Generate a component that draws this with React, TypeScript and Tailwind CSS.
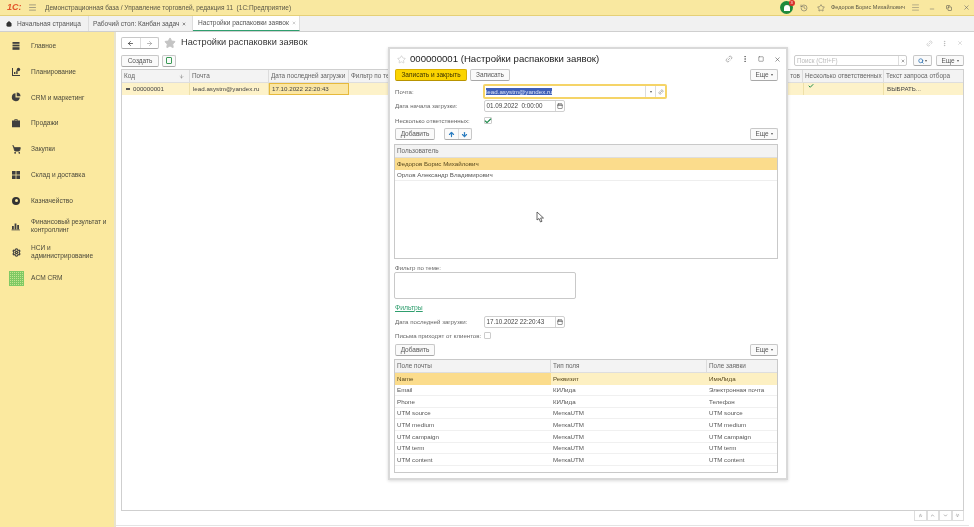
import React from "react";
import { House, History, Star, X, Link2, EllipsisVertical, Square, Minus, Calendar, Check, ArrowLeft, ArrowRight, ArrowUp, ArrowDown, Search, ChevronDown, ShoppingCart, Settings, Menu, Copy, ChevronsUp, ChevronUp, ChevronsDown } from "lucide-react";

const Ico = ({ children }: { children: React.ReactNode }) => (
  <svg width="10" height="10" viewBox="0 0 10 10" fill="#3f3f3f">{children}</svg>
);
const Btn = ({ children, className = "" }: { children?: React.ReactNode; className?: string }) => (
  <div className={"flex items-center justify-center h-[11.5px] rounded-[2px] border border-[#c8c8c8] border-b-[#a8a8a8] bg-[#fafafa] text-[6.5px] text-[#555] " + className}>{children}</div>
);
const More = () => (
  <Btn className="w-[28px] gap-[2px]">Еще<span className="w-0 h-0 border-x-[1.5px] border-x-transparent border-t-[2px] border-t-[#555]" /></Btn>
);
const Item = ({ icon, children, two }: { icon: React.ReactNode; children: React.ReactNode; two?: boolean }) => (
  <div className="flex items-center h-[25.8px] shrink-0">
    <div className="w-[31px] flex justify-center pl-[1px] text-[#3f3f3f]">{icon}</div>
    <div className={"text-[6.6px] text-[#4c4a3c] " + (two ? "leading-[8px]" : "")}>{children}</div>
  </div>
);
const Label = ({ children, className = "" }: { children: React.ReactNode; className?: string }) => (
  <div className={"w-[89px] shrink-0 text-[6.1px] text-[#666] whitespace-nowrap " + className}>{children}</div>
);
const DateField = ({ v }: { v: string }) => (
  <div className="flex items-center w-[81px] h-[11.5px] rounded-[2px] border border-[#cfcfcf] bg-white text-[6.3px] text-[#444]">
    <div className="flex-1 pl-[1.5px] whitespace-pre">{v}</div>
    <div className="w-[9px] h-full border-l border-[#d5d5d5] flex items-center justify-center"><Calendar size={6} strokeWidth={2} className="text-[#333]" /></div>
  </div>
);
const fields = [
  ["Email", "КИЛида", "Электронная почта"],
  ["Phone", "КИЛида", "Телефон"],
  ["UTM source", "МеткаUTM", "UTM source"],
  ["UTM medium", "МеткаUTM", "UTM medium"],
  ["UTM campaign", "МеткаUTM", "UTM campaign"],
  ["UTM term", "МеткаUTM", "UTM term"],
  ["UTM content", "МеткаUTM", "UTM content"],
];
const TH = ({ children, className = "" }: { children?: React.ReactNode; className?: string }) => (
  <div className={"h-full flex items-center px-[2px] border-r border-[#dcdcdc] text-[6.4px] text-[#666] whitespace-nowrap overflow-hidden " + className}>{children}</div>
);

export default function App() {
  return (
    <div className="relative w-[974px] h-[527px] overflow-hidden bg-white flex flex-col blur-[0.4px]" style={{ fontFamily: '"Liberation Sans", Arial, sans-serif' }}>
      {/* top bar */}
      <div className="h-[16px] shrink-0 flex items-center bg-[#f9e8a0] border-b border-[#e5d078]">
        <div className="w-[28px] pl-[7px] text-[9px] leading-none font-bold italic text-[#e2562a]">1С:</div>
        <Menu size={9} className="text-[#666]" strokeWidth={1.5} />
        <div className="ml-[8px] text-[6.5px] text-[#5a5746] whitespace-pre">Демонстрационная база / Управление торговлей, редакция 11  (1С:Предприятие)</div>
        <div className="flex-1" />
        <div className="relative w-[13px] h-[13px] rounded-full bg-[#1e8a3c] mr-[7px] flex items-center justify-center">
          <div className="w-[6px] h-[6px] rounded-t-full bg-white" />
          <div className="absolute -top-[1.5px] -right-[1.5px] w-[6px] h-[6px] rounded-full bg-[#d9322c] text-[4px] leading-[6px] text-center text-white">3</div>
        </div>
        <History size={8} className="text-[#555] mr-[9px]" strokeWidth={1.5} />
        <Star size={8} className="text-[#555] mr-[6px]" strokeWidth={1.5} />
        <div className="text-[5.6px] text-[#5a5746] whitespace-nowrap mr-[6px]">Федоров Борис Михайлович</div>
        <Menu size={9} className="text-[#666] mr-[9px]" strokeWidth={1.2} />
        <Minus size={6} className="text-[#666] mr-[11px] mt-[3px]" />
        <Copy size={6} className="text-[#444] mr-[11px]" strokeWidth={2} />
        <X size={7} className="text-[#666] mr-[4px]" />
      </div>
      {/* tabs */}
      <div className="h-[16px] shrink-0 flex bg-[#f1f1f1] border-b border-[#cfcfcf] text-[6.6px] text-[#555]">
        <div className="w-[89px] flex items-center border-r border-[#ddd]">
          <House size={6} fill="#333" className="ml-[6px] mr-[5px] text-[#333]" />Начальная страница
        </div>
        <div className="w-[104px] flex items-center pl-[4px] border-r border-[#ddd] whitespace-nowrap">
          Рабочий стол: Канбан задач<X size={4} strokeWidth={3} className="ml-[3px] text-[#333]" />
        </div>
        <div className="w-[107px] flex items-center pl-[5px] bg-white border-r border-[#ddd] border-b border-b-[#2f9e6e] whitespace-nowrap">
          Настройки распаковки заявок<X size={4} strokeWidth={2} className="ml-[3px] text-[#777]" />
        </div>
      </div>
      <div className="flex-1 flex min-h-0">
        {/* sidebar */}
        <div className="w-[116px] shrink-0 flex flex-col bg-[#fbe99f] border-r-2 border-[#e9e4cc] pt-[1px]">
          <Item icon={<Ico><rect x="1.5" y="1" width="7" height="1.8" /><rect x="1.5" y="3.6" width="7" height="1.8" /><rect x="1.5" y="6.2" width="7" height="1.8" /><rect x="1.5" y="8.2" width="7" height="0.8" /></Ico>}>Главное</Item>
          <Item icon={<Ico><path d="M1 1h1v7h7v1H1z" /><rect x="3" y="5" width="1.4" height="2" /><rect x="5.2" y="3.5" width="1.4" height="3.5" /><circle cx="7.5" cy="2.5" r="1.7" /></Ico>}>Планирование</Item>
          <Item icon={<Ico><path d="M4.5 1.2a4 4 0 1 0 4.3 4.3H4.5z" /><path d="M5.7 0.5v3.8h3.8a3.8 3.8 0 0 0-3.8-3.8z" /></Ico>}>CRM и маркетинг</Item>
          <Item icon={<Ico><path d="M3.4 2.5V1.2h3.2v1.3H9v6.7H1V2.5zM4.2 2.5h1.6v-.6H4.2z" /></Ico>}>Продажи</Item>
          <Item icon={<ShoppingCart size={9} fill="#3f3f3f" strokeWidth={2.5} />}>Закупки</Item>
          <Item icon={<Ico><rect x="1" y="1" width="3.6" height="3.6" /><rect x="5.4" y="1" width="3.6" height="3.6" /><rect x="1" y="5.4" width="3.6" height="3.6" /><rect x="5.4" y="5.4" width="3.6" height="3.6" /></Ico>}>Склад и доставка</Item>
          <Item icon={<div className="w-[8px] h-[8px] rounded-full bg-[#333] flex items-center justify-center"><div className="w-[3px] h-[3px] rounded-full bg-[#fbe99f]" /></div>}>Казначейство</Item>
          <Item two icon={<Ico><rect x="1" y="5" width="1.8" height="3.5" /><rect x="3.6" y="2.5" width="1.8" height="6" /><rect x="6.2" y="4" width="1.8" height="4.5" /><rect x="0.5" y="8.6" width="8.5" height="0.7" /></Ico>}>Финансовый результат и<br />контроллинг</Item>
          <Item two icon={<Settings size={9} strokeWidth={3.2} />}>НСИ и<br />администрирование</Item>
          <div className="flex items-center h-[25.8px] shrink-0">
            <div className="ml-[9px] w-[15px] h-[15px] mr-[7px] bg-[#c4e58f] bg-[linear-gradient(#7fc964_50%,transparent_50%),linear-gradient(90deg,#7fc964_50%,transparent_50%)] bg-[length:2px_2px]" />
            <div className="text-[6.6px] text-[#4c4a3c]">ACM CRM</div>
          </div>
        </div>
        {/* content */}
        <div className="flex-1 min-w-0 flex flex-col pl-[5px] pr-[10px]">
          <div className="flex items-center h-[21px] shrink-0 pt-[1px]">
            <div className="flex h-[12px] w-[38px] rounded-[2px] border border-[#c8c8c8] border-b-[#aaa]">
              <div className="flex-1 flex items-center justify-center border-r border-[#ddd]"><ArrowLeft size={7} strokeWidth={2.5} className="text-[#333]" /></div>
              <div className="flex-1 flex items-center justify-center"><ArrowRight size={7} strokeWidth={2} className="text-[#888]" /></div>
            </div>
            <Star size={12} fill="#c4c4c4" className="ml-[5px] text-[#c4c4c4]" />
            <div className="ml-[5px] text-[9.2px] text-[#333] whitespace-nowrap">Настройки распаковки заявок</div>
            <div className="flex-1" />
            <Link2 size={7} className="text-[#bbb] mr-[8px] -rotate-45" />
            <EllipsisVertical size={7} className="text-[#aaa] mr-[9px]" />
            <X size={6} className="text-[#bbb] mr-[1px]" />
          </div>
          <div className="flex items-center h-[15px] shrink-0">
            <Btn className="w-[38px] h-[12px]">Создать</Btn>
            <Btn className="w-[14px] h-[12px] ml-[3px]"><div className="w-[6px] h-[7px] border border-[#3a9a55] rounded-[1px]" /></Btn>
            <div className="flex-1" />
            <div className="flex items-center h-[11.5px] w-[113px] border border-[#ccc] rounded-[2px] text-[6.3px] text-[#bbb] pl-[2px] mr-[6px]">
              <div className="flex-1">Поиск (Ctrl+F)</div>
              <div className="w-[8px] h-full border-l border-[#ddd] flex items-center justify-center"><X size={4} strokeWidth={3} className="text-[#555]" /></div>
            </div>
            <Btn className="w-[19px] mr-[4px] gap-[1px]"><Search size={6} strokeWidth={3} className="text-[#2a6fb0]" /><span className="w-0 h-0 border-x-[1.5px] border-x-transparent border-t-[2px] border-t-[#555]" /></Btn>
            <More />
          </div>
          <div className="flex-1 min-h-0 mt-[1px] border border-b-0 border-[#cfcfcf] flex flex-col">
            <div className="flex h-[13px] shrink-0 bg-[#f3f3f3] border-b border-[#dedede]">
              <TH className="w-[68px] justify-between pr-[5px]">Код<ArrowDown size={5} strokeWidth={2} /></TH>
              <TH className="w-[79px]">Почта</TH>
              <TH className="w-[80px]">Дата последней загрузки</TH>
              <TH className="w-[39px] border-r-0 px-[1px]">Фильтр по те</TH>
              <div className="flex-1" />
              <TH className="w-[15px] justify-end">тов</TH>
              <TH className="w-[81px]">Несколько ответственных</TH>
              <TH className="w-[79px] border-r-0">Текст запроса отбора</TH>
            </div>
            <div className="flex h-[12px] shrink-0 bg-[#fdf2c9] text-[6.2px] text-[#444]">
              <div className="w-[68px] flex items-center pl-[4px] gap-[3px] border-r border-[#eee0a8]"><span className="w-[4px] h-[1.5px] bg-[#555]" />000000001</div>
              <div className="w-[79px] flex items-center pl-[3px] border-r border-[#eee0a8]">lead.asystm@yandex.ru</div>
              <div className="w-[80px] flex items-center pl-[2px] bg-[#fbe6a2] border border-[#e6b93c]">17.10.2022 22:20:43</div>
              <div className="flex-1" />
              <div className="w-[81px] border-x border-[#eee0a8] pl-[4px]"><Check size={6} strokeWidth={4} className="text-[#1d8a4a]" /></div>
              <div className="w-[79px] flex items-center pl-[3px]">ВЫБРАТЬ...</div>
            </div>
            <div className="flex-1" />
          </div>
          <div className="h-[11px] shrink-0 border-t border-[#cfcfcf] flex justify-end">
            {[ChevronsUp, ChevronUp, ChevronDown, ChevronsDown].map((I, i) => (
              <div key={i} className="w-[12.5px] h-[10px] border-l border-b border-r border-[#ddd] flex items-center justify-center"><I size={5} strokeWidth={3} className="text-[#888]" /></div>
            ))}
          </div>
          <div className="h-[5px] shrink-0 -mx-[5px] border-b border-[#e4e4e4]" />
          <div className="h-px shrink-0" />
        </div>
      </div>

      {/* modal */}
      <div className="absolute left-[388px] top-[47px] w-[400px] h-[433px] bg-white border-2 border-[#d9d9d9] shadow-[0_1px_3px_rgba(0,0,0,0.15)] flex flex-col pl-[5px] pr-[8px]">
        <div className="flex items-center h-[20px] shrink-0">
          <Star size={9} className="text-[#bdbdbd] ml-[2px]" strokeWidth={1.5} />
          <div className="ml-[4px] text-[9.6px] text-[#222] whitespace-nowrap">000000001 (Настройки распаковки заявок)</div>
          <div className="flex-1" />
          <Link2 size={8} className="text-[#777] mr-[8px] -rotate-45" strokeWidth={1.5} />
          <EllipsisVertical size={8} className="text-[#555] mr-[9px]" strokeWidth={2} />
          <Square size={6} className="text-[#555] mr-[10px]" strokeWidth={2} />
          <X size={7} className="text-[#555] mr-[-3px]" strokeWidth={2} />
        </div>
        <div className="flex items-center shrink-0 h-[12px]">
          <div className="flex items-center justify-center w-[72px] h-[11.5px] rounded-[2px] bg-[#fbd400] border border-[#d9ae00] border-b-[#b89300] text-[6.5px] text-[#3c3300]">Записать и закрыть</div>
          <Btn className="w-[40px] ml-[3px]">Записать</Btn>
          <div className="flex-1" />
          <More />
        </div>
        <div className="flex items-center shrink-0 h-[15px] mt-[3px]">
          <Label>Почта:</Label>
          <div className="flex items-center w-[184px] h-[14.5px] -ml-[1px] rounded-[2px] border-2 border-[#f5d468] bg-white text-[6.2px]">
            <div className="flex-1 pl-[1px]"><span className="bg-[#3f5fb8] text-[#dfe6f7]">lead.asystm@yandex.ru</span></div>
            <div className="w-[10px] h-full border-l border-[#ddd] flex items-center justify-center"><span className="w-0 h-0 border-x-[1.5px] border-x-transparent border-t-[2px] border-t-[#555]" /></div>
            <div className="w-[10px] h-full border-l border-[#ddd] flex items-center justify-center"><Link2 size={6} className="text-[#777] -rotate-45" /></div>
          </div>
        </div>
        <div className="flex items-center shrink-0 h-[12px] mt-[1px]">
          <Label>Дата начала загрузки:</Label>
          <DateField v="01.09.2022  0:00:00" />
        </div>
        <div className="flex items-center shrink-0 h-[9px] mt-[4px]">
          <Label>Несколько ответственных:</Label>
          <div className="w-[7.5px] h-[7.5px] border border-[#ccc] rounded-[1px] flex items-center justify-center"><Check size={8} strokeWidth={3.5} className="text-[#1d8a4a] shrink-0" /></div>
        </div>
        <div className="flex items-center shrink-0 h-[12px] mt-[3px]">
          <Btn className="w-[40px]">Добавить</Btn>
          <div className="flex h-[11.5px] w-[28px] ml-[9px] rounded-[2px] border border-[#c8c8c8] border-b-[#aaa] bg-[#fafafa]">
            <div className="flex-1 flex items-center justify-center border-r border-[#ddd]"><ArrowUp size={7} strokeWidth={4} className="text-[#2a7cc0]" /></div>
            <div className="flex-1 flex items-center justify-center"><ArrowDown size={7} strokeWidth={4} className="text-[#2a7cc0]" /></div>
          </div>
          <div className="flex-1" />
          <More />
        </div>
        <div className="h-[115px] shrink-0 mt-[4px] -ml-[1px] border border-[#c9c9c9] flex flex-col">
          <div className="h-[13px] shrink-0 flex items-center px-[2px] bg-[#f3f3f3] border-b border-[#dedede] text-[6.4px] text-[#666]">Пользователь</div>
          <div className="h-[12px] shrink-0 flex items-center px-[2px] bg-[#fbdc8c] text-[6.2px] text-[#5a4a20]">Федоров Борис Михайлович</div>
          <div className="h-[11px] shrink-0 flex items-center px-[2px] border-b border-[#eee] text-[6.2px] text-[#555]">Орлов Александр Владимирович</div>
        </div>
        <div className="shrink-0 mt-[5px] h-[8px] flex items-center text-[6.1px] text-[#666]">Фильтр по теме:</div>
        <div className="shrink-0 -ml-[1px] w-[182px] h-[27px] border border-[#c9c9c9] rounded-[2px]" />
        <div className="shrink-0 mt-[4px] h-[10px] flex items-center text-[6.8px] text-[#2f9e6e] underline">Фильтры</div>
        <div className="flex items-center shrink-0 h-[12px] mt-[3px]">
          <Label>Дата последней загрузки:</Label>
          <DateField v="17.10.2022 22:20:43" />
        </div>
        <div className="flex items-center shrink-0 h-[9px] mt-[3px]">
          <Label>Письма приходят от клиентов:</Label>
          <div className="w-[7px] h-[7px] border border-[#ccc] rounded-[1px]" />
        </div>
        <div className="flex items-center shrink-0 h-[12px] mt-[4px]">
          <Btn className="w-[40px]">Добавить</Btn>
          <div className="flex-1" />
          <More />
        </div>
        <div className="h-[114px] shrink-0 mt-[3px] -ml-[1px] border border-[#c9c9c9] flex flex-col">
          <div className="flex h-[13px] shrink-0 bg-[#f3f3f3] border-b border-[#dedede]">
            <TH className="w-[156px]">Поле почты</TH>
            <TH className="w-[156px]">Тип поля</TH>
            <TH className="flex-1 border-r-0">Поле заявки</TH>
          </div>
          <div className="flex h-[11.6px] shrink-0 bg-[#fdf0c2] text-[6.2px] text-[#5a4a20]">
            <div className="w-[156px] flex items-center px-[2px] bg-[#fbdc8c]">Name</div>
            <div className="w-[156px] flex items-center px-[2px]">Реквизит</div>
            <div className="flex-1 flex items-center px-[2px]">ИмяЛида</div>
          </div>
          {fields.map((r) => (
            <div key={r[0]} className="flex h-[11.6px] shrink-0 border-b border-[#f0f0f0] text-[6.2px] text-[#555]">
              <div className="w-[156px] flex items-center px-[2px]">{r[0]}</div>
              <div className="w-[156px] flex items-center px-[2px]">{r[1]}</div>
              <div className="flex-1 flex items-center px-[2px]">{r[2]}</div>
            </div>
          ))}
        </div>
      </div>
      {/* cursor */}
      <svg className="absolute left-[536px] top-[211px]" width="9" height="12" viewBox="0 0 9 12"><path d="M1 1 L1 9 L3 7.5 L4.5 11 L6 10.3 L4.6 7 L7.5 7 Z" fill="#fff" stroke="#444" strokeWidth="0.8" /></svg>
    </div>
  );
}
